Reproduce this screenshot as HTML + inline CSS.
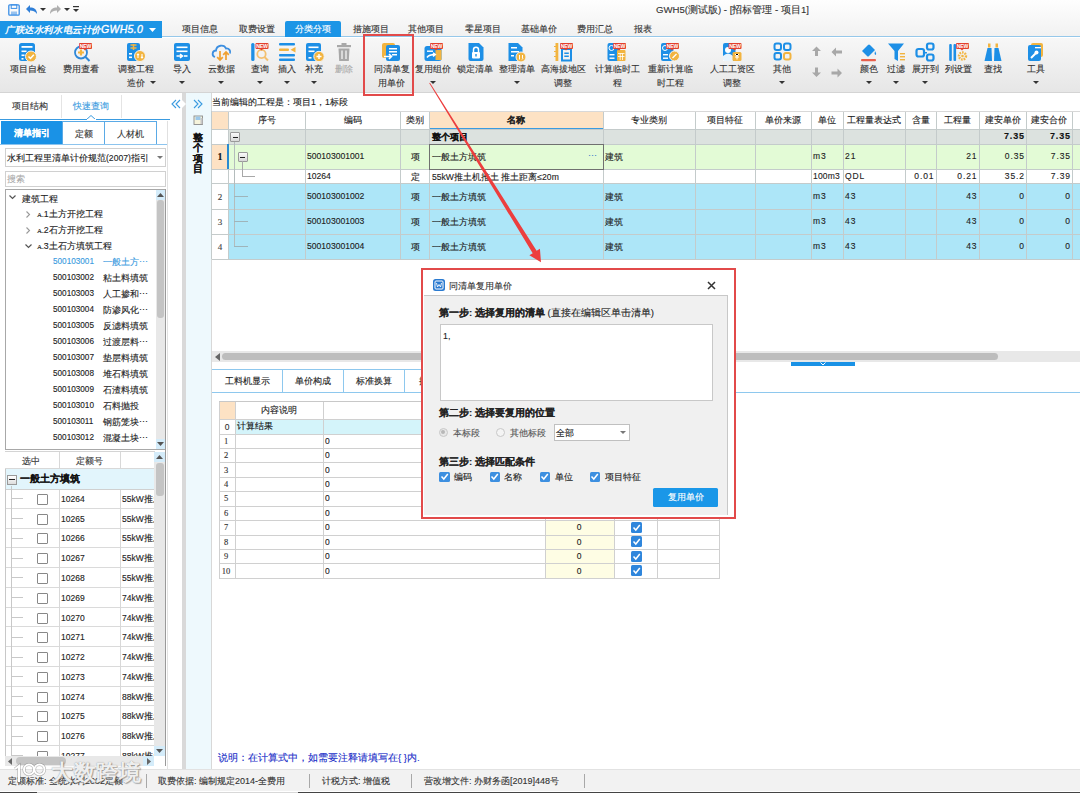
<!DOCTYPE html>
<html><head><meta charset="utf-8"><style>
html,body{margin:0;padding:0;width:1080px;height:793px;overflow:hidden;background:#fff}
body{position:relative;font-family:"Liberation Sans",sans-serif}
div{position:absolute;box-sizing:content-box}
.t{white-space:nowrap;-webkit-text-stroke:0.12px currentColor}
</style></head><body>
<div style="left:0px;top:0px;width:1080px;height:37px;background:linear-gradient(#fefefe,#f1f1f1)"></div>
<svg style="position:absolute;left:7.5px;top:3.5px" width="12" height="12" viewBox="0 0 12 12"><rect x="0.8" y="0.8" width="10.4" height="10.4" rx="1" fill="none" stroke="#3a8ee6" stroke-width="1.3"/><rect x="3.2" y="0.8" width="5.6" height="3.6" fill="none" stroke="#3a8ee6" stroke-width="1"/><rect x="3" y="7.5" width="6" height="3.5" fill="#3a8ee6" opacity=".5"/></svg>
<svg style="position:absolute;left:25px;top:4px" width="13" height="11" viewBox="0 0 13 11"><path d="M1 5 L5 1 L5 3.5 C9 3.5 12 5 12 10 C10 7 8 6.5 5 6.5 L5 9 Z" fill="#2f7fd8"/></svg>
<svg style="position:absolute;left:40px;top:8px" width="6" height="4" viewBox="0 0 6 4"><path d="M0 0 L6 0 L3 3 Z" fill="#333"/></svg>
<svg style="position:absolute;left:49px;top:4px" width="13" height="11" viewBox="0 0 13 11"><path d="M12 5 L8 1 L8 3.5 C4 3.5 1 5 1 10 C3 7 5 6.5 8 6.5 L8 9 Z" fill="#b0b0b0"/></svg>
<svg style="position:absolute;left:64px;top:8px" width="6" height="4" viewBox="0 0 6 4"><path d="M0 0 L6 0 L3 3 Z" fill="#333"/></svg>
<svg style="position:absolute;left:73px;top:6px" width="6" height="8" viewBox="0 0 6 8"><rect x="0" y="0" width="6" height="1.2" fill="#333"/><path d="M0 3 L6 3 L3 6 Z" fill="#333"/></svg>
<div class="t" style="left:656px;top:3.00px;height:14px;line-height:14px;font-size:9.6px;color:#333;text-align:left;">GWH5(测试版) - [招标管理 - 项目1]</div>
<div style="left:0px;top:21px;width:162px;height:16.5px;background:#1c95e6"></div>
<div class="t" style="left:5px;top:21.00px;height:16px;line-height:16px;font-size:9.3px;color:#fff;text-align:left;font-style:italic;letter-spacing:0.6px;-webkit-text-stroke:0.35px #fff">广联达水利水电云计价<span style="font-size:10.5px;letter-spacing:0.3px;font-style:italic">GWH5.0</span></div>
<svg style="position:absolute;left:149px;top:27.5px" width="7" height="4" viewBox="0 0 7 4"><path d="M0 0 L7 0 L3.5 4 Z" fill="#fff"/></svg>
<div style="left:162px;top:36px;width:918px;height:1.4px;background:#96c8ea"></div>
<div style="left:0px;top:37.5px;width:1080px;height:1px;background:#fbfbfb"></div>
<div class="t" style="left:140.0px;top:21.00px;width:120px;height:16px;line-height:16px;font-size:8.8px;color:#333;text-align:center;">项目信息</div>
<div class="t" style="left:197.0px;top:21.00px;width:120px;height:16px;line-height:16px;font-size:8.8px;color:#333;text-align:center;">取费设置</div>
<div style="left:285px;top:21px;width:56px;height:16px;background:#1c95e6;border-radius:2px 2px 0 0"></div>
<div class="t" style="left:253.0px;top:21.00px;width:120px;height:16px;line-height:16px;font-size:8.8px;color:#fff;text-align:center;">分类分项</div>
<div class="t" style="left:311.0px;top:21.00px;width:120px;height:16px;line-height:16px;font-size:8.8px;color:#333;text-align:center;">措施项目</div>
<div class="t" style="left:366.0px;top:21.00px;width:120px;height:16px;line-height:16px;font-size:8.8px;color:#333;text-align:center;">其他项目</div>
<div class="t" style="left:423.0px;top:21.00px;width:120px;height:16px;line-height:16px;font-size:8.8px;color:#333;text-align:center;">零星项目</div>
<div class="t" style="left:479.0px;top:21.00px;width:120px;height:16px;line-height:16px;font-size:8.8px;color:#333;text-align:center;">基础单价</div>
<div class="t" style="left:535.0px;top:21.00px;width:120px;height:16px;line-height:16px;font-size:8.8px;color:#333;text-align:center;">费用汇总</div>
<div class="t" style="left:583.0px;top:21.00px;width:120px;height:16px;line-height:16px;font-size:8.8px;color:#333;text-align:center;">报表</div>
<div style="left:0px;top:38px;width:1080px;height:55px;background:linear-gradient(#f7f7f7,#e6e6e6)"></div>
<div style="left:0px;top:92px;width:1080px;height:1px;background:#d4d4d4"></div>
<svg style="position:absolute;left:18px;top:42px" width="20" height="21" viewBox="0 0 20 21"><rect x="1" y="1" width="16" height="18" rx="2.5" fill="#1d8fe6"/><rect x="3.5" y="4" width="11" height="1.8" fill="#fff"/><rect x="3.5" y="8.5" width="5" height="1.6" fill="#fff"/><rect x="3.5" y="12.5" width="3" height="1.6" fill="#fff"/><rect x="3.5" y="16" width="2" height="1.6" fill="#fff"/><circle cx="13" cy="14.5" r="5.5" fill="#f2b440" stroke="#f4f4f4" stroke-width="1"/><path d="M10.5 14.5 L12.5 16.5 L15.8 12.8" stroke="#fff" stroke-width="1.5" fill="none"/></svg>
<div class="t" style="left:-12.0px;top:62.00px;width:80px;height:14px;line-height:14px;font-size:8.8px;color:#333;text-align:center;">项目自检</div>
<svg style="position:absolute;left:71px;top:42px" width="22" height="21" viewBox="0 0 22 21"><circle cx="10" cy="10.5" r="6" fill="none" stroke="#2f88d8" stroke-width="1.8"/><path d="M14.3 14.8 L18.5 19" stroke="#2f88d8" stroke-width="2"/><path d="M10 7.5 V13.5 M7 10.5 H13" stroke="#f2b440" stroke-width="2.2"/><g transform="translate(8,1)"><rect x="0" y="0" width="13" height="6" rx="1" fill="#e3402e"/><path d="M4 5.5 L6 7.5 L8 5.5 Z" fill="#e3402e"/><text x="6.5" y="5" font-size="5.2" fill="#fff" text-anchor="middle" font-family="Liberation Sans" font-weight="bold" letter-spacing="-0.2">NEW</text></g></svg>
<div class="t" style="left:41.0px;top:62.00px;width:80px;height:14px;line-height:14px;font-size:8.8px;color:#333;text-align:center;">费用查看</div>
<svg style="position:absolute;left:126px;top:42px" width="22" height="21" viewBox="0 0 22 21"><rect x="1" y="1" width="13" height="18" rx="2" fill="#1d8fe6"/><path d="M4.5 3 H10.5 M4.5 6 H10.5 M7.5 2 V8" stroke="#f2b440" stroke-width="1.5"/><rect x="3" y="11" width="3" height="1.6" fill="#fff"/><rect x="3" y="14.5" width="3" height="1.6" fill="#fff"/><circle cx="14" cy="14" r="5.5" fill="#f2b440" stroke="#f4f4f4" stroke-width="1"/><path d="M12 12 V16 M16 12 V16 M11 13 L12 12 L13 13 M15 15 L16 16 L17 15" stroke="#fff" stroke-width="1.1" fill="none"/></svg>
<div class="t" style="left:96.0px;top:62.00px;width:80px;height:14px;line-height:14px;font-size:8.8px;color:#333;text-align:center;">调整工程</div>
<div class="t" style="left:96.0px;top:76.00px;width:80px;height:14px;line-height:14px;font-size:8.8px;color:#333;text-align:center;">造价 </div>
<svg style="position:absolute;left:150px;top:81px" width="6" height="4" viewBox="0 0 6 4"><path d="M0 0 L6 0 L3 3 Z" fill="#333"/></svg>
<svg style="position:absolute;left:173px;top:42px" width="18" height="21" viewBox="0 0 18 21"><rect x="1" y="1" width="16" height="18" rx="2" fill="#1d8fe6"/><rect x="3.5" y="4.5" width="11" height="1.6" fill="#fff"/><rect x="3.5" y="8.5" width="11" height="1.6" fill="#fff"/><path d="M3.5 14 H9 M7 12 L9.5 14 L7 16" stroke="#fff" stroke-width="1.6" fill="none"/><rect x="11" y="13.2" width="3.5" height="1.6" fill="#fff"/></svg>
<div class="t" style="left:142.0px;top:62.00px;width:80px;height:14px;line-height:14px;font-size:8.8px;color:#333;text-align:center;">导入</div>
<svg style="position:absolute;left:179px;top:81px" width="6" height="4" viewBox="0 0 6 4"><path d="M0 0 L6 0 L3 3 Z" fill="#333"/></svg>
<svg style="position:absolute;left:211px;top:42px" width="22" height="21" viewBox="0 0 22 21"><path d="M4 15 C0.5 14 1 8.5 5 8.5 C5.5 3 13 2 15 6.5 C18 6 20 9 19 11.5" fill="none" stroke="#3b8ee0" stroke-width="1.8"/><path d="M9 9 V18 M6.2 15.2 L9 18 L11.8 15.2" stroke="#f0a030" stroke-width="1.7" fill="none"/><path d="M15 18 V10 M12.2 12.8 L15 10 L17.8 12.8" stroke="#f0a030" stroke-width="1.7" fill="none"/></svg>
<div class="t" style="left:181.0px;top:62.00px;width:80px;height:14px;line-height:14px;font-size:8.8px;color:#333;text-align:center;">云数据</div>
<svg style="position:absolute;left:218px;top:81px" width="6" height="4" viewBox="0 0 6 4"><path d="M0 0 L6 0 L3 3 Z" fill="#333"/></svg>
<svg style="position:absolute;left:250px;top:42px" width="22" height="21" viewBox="0 0 22 21"><rect x="1.2" y="1" width="3.3" height="18" rx="1.5" fill="#1d8fe6"/><circle cx="11.5" cy="12" r="4.2" fill="none" stroke="#f3c070" stroke-width="1.8"/><path d="M14.5 15 L18 18.5" stroke="#f3c070" stroke-width="2"/><g transform="translate(5.5,1)"><rect x="0" y="0" width="13" height="6" rx="1" fill="#e3402e"/><path d="M4 5.5 L6 7.5 L8 5.5 Z" fill="#e3402e"/><text x="6.5" y="5" font-size="5.2" fill="#fff" text-anchor="middle" font-family="Liberation Sans" font-weight="bold" letter-spacing="-0.2">NEW</text></g></svg>
<div class="t" style="left:220.0px;top:62.00px;width:80px;height:14px;line-height:14px;font-size:8.8px;color:#333;text-align:center;">查询</div>
<svg style="position:absolute;left:257px;top:81px" width="6" height="4" viewBox="0 0 6 4"><path d="M0 0 L6 0 L3 3 Z" fill="#333"/></svg>
<svg style="position:absolute;left:278px;top:42px" width="20" height="21" viewBox="0 0 20 21"><rect x="1" y="1" width="16" height="2.6" rx="1" fill="#1d8fe6"/><rect x="1" y="6.5" width="10" height="2.6" rx="1" fill="#f2b440"/><path d="M17.5 5 L12.5 7.8 L17.5 10.6 Z" fill="#f2b440"/><rect x="1" y="12" width="16" height="2.6" rx="1" fill="#1d8fe6"/><rect x="1" y="16.5" width="16" height="2.6" rx="1" fill="#1d8fe6"/></svg>
<div class="t" style="left:247.0px;top:62.00px;width:80px;height:14px;line-height:14px;font-size:8.8px;color:#333;text-align:center;">插入</div>
<svg style="position:absolute;left:284px;top:81px" width="6" height="4" viewBox="0 0 6 4"><path d="M0 0 L6 0 L3 3 Z" fill="#333"/></svg>
<svg style="position:absolute;left:305px;top:42px" width="20" height="21" viewBox="0 0 20 21"><rect x="1" y="1" width="15" height="18" rx="2" fill="#1d8fe6"/><rect x="3.5" y="4.5" width="10" height="1.6" fill="#fff"/><rect x="3.5" y="8.5" width="6" height="1.6" fill="#fff"/><rect x="3.5" y="15" width="3" height="1.6" fill="#fff"/><circle cx="14" cy="14.5" r="5.2" fill="#f2b440" stroke="#f4f4f4" stroke-width="1"/><path d="M14 12 V17 M11.5 14.5 H16.5" stroke="#fff" stroke-width="1.4"/></svg>
<div class="t" style="left:274.0px;top:62.00px;width:80px;height:14px;line-height:14px;font-size:8.8px;color:#333;text-align:center;">补充</div>
<svg style="position:absolute;left:311px;top:81px" width="6" height="4" viewBox="0 0 6 4"><path d="M0 0 L6 0 L3 3 Z" fill="#333"/></svg>
<svg style="position:absolute;left:335px;top:42px" width="18" height="21" viewBox="0 0 18 21"><rect x="2" y="3" width="14" height="2.2" fill="#a8a8a8"/><rect x="6.5" y="1" width="5" height="2" fill="#a8a8a8"/><path d="M3.5 6.5 H14.5 L13.8 19 H4.2 Z" fill="#a8a8a8"/><rect x="6.3" y="8.5" width="1.4" height="8.5" fill="#f0f0f0"/><rect x="10.3" y="8.5" width="1.4" height="8.5" fill="#f0f0f0"/></svg>
<div class="t" style="left:304.0px;top:62.00px;width:80px;height:14px;line-height:14px;font-size:8.8px;color:#aaa;text-align:center;">删除</div>
<svg style="position:absolute;left:381px;top:41px" width="22" height="21" viewBox="0 0 22 21"><rect x="1" y="2" width="13" height="15" rx="2" fill="#f2b440"/><rect x="5" y="4" width="14" height="16" rx="2" fill="#1d8fe6"/><rect x="8" y="7" width="8" height="1.5" fill="#fff"/><rect x="8" y="10" width="8" height="1.5" fill="#fff"/><rect x="11" y="13" width="5" height="1.5" fill="#fff"/><path d="M3 15.5 H10 M8 13 L10.5 15.5 L8 18" stroke="#fff" stroke-width="1.6" fill="none"/></svg>
<div class="t" style="left:351.5px;top:62.00px;width:80px;height:14px;line-height:14px;font-size:8.8px;color:#333;text-align:center;">同清单复</div>
<div class="t" style="left:351.5px;top:76.00px;width:80px;height:14px;line-height:14px;font-size:8.8px;color:#333;text-align:center;">用单价</div>
<svg style="position:absolute;left:423px;top:42px" width="22" height="21" viewBox="0 0 22 21"><rect x="1.5" y="4" width="17" height="15" rx="2.5" fill="#1d8fe6"/><rect x="12.5" y="8" width="6" height="10" fill="#f2b440"/><rect x="4" y="8.5" width="6" height="1.4" fill="#fff"/><path d="M4 15.5 C6 12.5 9 12.5 12 12.5 M10 10.8 L12.3 12.5 L10 14.3" stroke="#fff" stroke-width="1.5" fill="none"/><g transform="translate(7,1)"><rect x="0" y="0" width="13" height="6" rx="1" fill="#e3402e"/><path d="M4 5.5 L6 7.5 L8 5.5 Z" fill="#e3402e"/><text x="6.5" y="5" font-size="5.2" fill="#fff" text-anchor="middle" font-family="Liberation Sans" font-weight="bold" letter-spacing="-0.2">NEW</text></g></svg>
<div class="t" style="left:393.0px;top:62.00px;width:80px;height:14px;line-height:14px;font-size:8.8px;color:#333;text-align:center;">复用组价</div>
<svg style="position:absolute;left:430px;top:81px" width="6" height="4" viewBox="0 0 6 4"><path d="M0 0 L6 0 L3 3 Z" fill="#333"/></svg>
<svg style="position:absolute;left:466px;top:42px" width="20" height="21" viewBox="0 0 20 21"><path d="M2.5 1 H13 L17.5 5.5 V17 Q17.5 19 15.5 19 H4.5 Q2.5 19 2.5 17 Z" fill="#1d8fe6"/><rect x="6" y="10" width="8" height="6.5" rx="1" fill="#fff"/><path d="M7.5 10 V7.8 A2.5 2.5 0 0 1 12.5 7.8 V10" stroke="#fff" stroke-width="1.5" fill="none"/><rect x="9.3" y="12" width="1.4" height="2.5" fill="#1d8fe6"/></svg>
<div class="t" style="left:435.0px;top:62.00px;width:80px;height:14px;line-height:14px;font-size:8.8px;color:#333;text-align:center;">锁定清单</div>
<svg style="position:absolute;left:507px;top:42px" width="21" height="21" viewBox="0 0 21 21"><path d="M1.5 1 H11 L15.5 5.5 V19 H1.5 Z" fill="#1d8fe6"/><rect x="4" y="5" width="6" height="1.5" fill="#fff"/><rect x="4" y="9" width="8" height="1.5" fill="#fff"/><rect x="4" y="13" width="3" height="1.5" fill="#fff"/><circle cx="14" cy="15" r="5" fill="#f2b440" stroke="#f4f4f4" stroke-width="1"/><path d="M12.5 13 V17.5 M15 13 Q17 14 15 15 Q17 16 15 17.5" stroke="#fff" stroke-width="1" fill="none"/></svg>
<div class="t" style="left:477.0px;top:62.00px;width:80px;height:14px;line-height:14px;font-size:8.8px;color:#333;text-align:center;">整理清单</div>
<svg style="position:absolute;left:514px;top:81px" width="6" height="4" viewBox="0 0 6 4"><path d="M0 0 L6 0 L3 3 Z" fill="#333"/></svg>
<svg style="position:absolute;left:553px;top:42px" width="22" height="21" viewBox="0 0 22 21"><rect x="2.5" y="1" width="2.8" height="18" fill="#f2b440"/><rect x="1" y="4" width="2" height="1" fill="#f2b440"/><rect x="1" y="9" width="2" height="1" fill="#f2b440"/><rect x="1" y="14" width="2" height="1" fill="#f2b440"/><rect x="9" y="7" width="9" height="11.5" fill="none" stroke="#1d8fe6" stroke-width="2"/><rect x="11.3" y="10.5" width="4.5" height="1.5" fill="#1d8fe6"/><rect x="11.3" y="13.5" width="4.5" height="1.5" fill="#1d8fe6"/><g transform="translate(7,1)"><rect x="0" y="0" width="13" height="6" rx="1" fill="#e3402e"/><path d="M4 5.5 L6 7.5 L8 5.5 Z" fill="#e3402e"/><text x="6.5" y="5" font-size="5.2" fill="#fff" text-anchor="middle" font-family="Liberation Sans" font-weight="bold" letter-spacing="-0.2">NEW</text></g></svg>
<div class="t" style="left:523.0px;top:62.00px;width:80px;height:14px;line-height:14px;font-size:8.8px;color:#333;text-align:center;">高海拔地区</div>
<div class="t" style="left:523.0px;top:76.00px;width:80px;height:14px;line-height:14px;font-size:8.8px;color:#333;text-align:center;">调整</div>
<svg style="position:absolute;left:606px;top:42px" width="22" height="21" viewBox="0 0 22 21"><rect x="1.5" y="1" width="12.5" height="18" rx="2" fill="#1d8fe6"/><circle cx="5.5" cy="6" r="2.5" fill="none" stroke="#fff" stroke-width="1"/><rect x="3.5" y="12" width="5" height="1.4" fill="#fff"/><rect x="3.5" y="15.5" width="5" height="1.4" fill="#fff"/><rect x="11" y="8" width="8.5" height="11" rx="1" fill="#f2b440"/><path d="M12 11.5 H18.5 M12 14.5 H18.5 M14.2 11.5 V18 M16.5 11.5 V18" stroke="#fff" stroke-width="0.8"/><g transform="translate(7,1)"><rect x="0" y="0" width="13" height="6" rx="1" fill="#e3402e"/><path d="M4 5.5 L6 7.5 L8 5.5 Z" fill="#e3402e"/><text x="6.5" y="5" font-size="5.2" fill="#fff" text-anchor="middle" font-family="Liberation Sans" font-weight="bold" letter-spacing="-0.2">NEW</text></g></svg>
<div class="t" style="left:577.0px;top:62.00px;width:80px;height:14px;line-height:14px;font-size:8.8px;color:#333;text-align:center;">计算临时工</div>
<div class="t" style="left:577.0px;top:76.00px;width:80px;height:14px;line-height:14px;font-size:8.8px;color:#333;text-align:center;">程</div>
<svg style="position:absolute;left:660px;top:42px" width="22" height="21" viewBox="0 0 22 21"><rect x="1" y="1" width="12.5" height="18" rx="2" fill="#1d8fe6"/><circle cx="5" cy="6" r="2.5" fill="none" stroke="#fff" stroke-width="1"/><rect x="3" y="12" width="5" height="1.4" fill="#fff"/><rect x="3" y="15.5" width="5" height="1.4" fill="#fff"/><circle cx="14.5" cy="14" r="5" fill="#f2b440" stroke="#f4f4f4" stroke-width="1"/><path d="M12.5 16 L16.5 12" stroke="#fff" stroke-width="1.2"/><g transform="translate(6,1)"><rect x="0" y="0" width="13" height="6" rx="1" fill="#e3402e"/><path d="M4 5.5 L6 7.5 L8 5.5 Z" fill="#e3402e"/><text x="6.5" y="5" font-size="5.2" fill="#fff" text-anchor="middle" font-family="Liberation Sans" font-weight="bold" letter-spacing="-0.2">NEW</text></g></svg>
<div class="t" style="left:630.0px;top:62.00px;width:80px;height:14px;line-height:14px;font-size:8.8px;color:#333;text-align:center;">重新计算临</div>
<div class="t" style="left:630.0px;top:76.00px;width:80px;height:14px;line-height:14px;font-size:8.8px;color:#333;text-align:center;">时工程</div>
<svg style="position:absolute;left:722px;top:42px" width="22" height="21" viewBox="0 0 22 21"><rect x="1" y="1" width="12.5" height="18" rx="2" fill="#1d8fe6"/><circle cx="6" cy="8" r="3" fill="#fff"/><path d="M1 14 Q6 9 11 14 V19 H1 Z" fill="#fff" opacity=".9"/><rect x="10.5" y="10" width="9" height="9" rx="1.5" fill="#f2b440"/><path d="M13 12 L15 14 L17 12 M15 14 V17.5 M13 15 H17" stroke="#fff" stroke-width="1"/><g transform="translate(6.5,1)"><rect x="0" y="0" width="13" height="6" rx="1" fill="#e3402e"/><path d="M4 5.5 L6 7.5 L8 5.5 Z" fill="#e3402e"/><text x="6.5" y="5" font-size="5.2" fill="#fff" text-anchor="middle" font-family="Liberation Sans" font-weight="bold" letter-spacing="-0.2">NEW</text></g></svg>
<div class="t" style="left:692.0px;top:62.00px;width:80px;height:14px;line-height:14px;font-size:8.8px;color:#333;text-align:center;">人工工资区</div>
<div class="t" style="left:692.0px;top:76.00px;width:80px;height:14px;line-height:14px;font-size:8.8px;color:#333;text-align:center;">调整</div>
<svg style="position:absolute;left:773px;top:42px" width="20" height="21" viewBox="0 0 20 21"><rect x="1.5" y="1.5" width="6.5" height="6.5" rx="2" fill="none" stroke="#1d8fe6" stroke-width="2"/><rect x="11" y="1.5" width="6.5" height="6.5" rx="2" fill="none" stroke="#1d8fe6" stroke-width="2"/><rect x="1.5" y="11" width="6.5" height="6.5" rx="2" fill="none" stroke="#1d8fe6" stroke-width="2"/><rect x="11" y="11" width="6.5" height="6.5" rx="2" fill="none" stroke="#f2b440" stroke-width="2"/></svg>
<div class="t" style="left:742.0px;top:62.00px;width:80px;height:14px;line-height:14px;font-size:8.8px;color:#333;text-align:center;">其他</div>
<svg style="position:absolute;left:779px;top:81px" width="6" height="4" viewBox="0 0 6 4"><path d="M0 0 L6 0 L3 3 Z" fill="#333"/></svg>
<svg style="position:absolute;left:811px;top:46px" width="11" height="11" viewBox="0 0 11 11"><path d="M5.5 0.5 L10 5 H7 V10 H4 V5 H1 Z" fill="#a8a8a8"/></svg>
<svg style="position:absolute;left:831px;top:47px" width="12" height="10" viewBox="0 0 12 10"><path d="M0.5 5 L5 0.5 V3.5 H11 V6.5 H5 V9.5 Z" fill="#a8a8a8"/></svg>
<svg style="position:absolute;left:811px;top:67px" width="11" height="11" viewBox="0 0 11 11"><path d="M5.5 10 L10 5.5 H7 V0.5 H4 V5.5 H1 Z" fill="#a8a8a8"/></svg>
<svg style="position:absolute;left:831px;top:68px" width="12" height="10" viewBox="0 0 12 10"><path d="M11 5 L6.5 0.5 V3.5 H0.5 V6.5 H6.5 V9.5 Z" fill="#a8a8a8"/></svg>
<svg style="position:absolute;left:859px;top:42px" width="20" height="21" viewBox="0 0 20 21"><path d="M3 9 L9 3 Q10 2 11 3 L16 8 L10 14 Q9 15 8 14 L3 9 Z" fill="#1d8fe6"/><path d="M16 9 Q18 12 16.5 13 Q15 12 16 9 Z" fill="#1d8fe6"/><rect x="2" y="17" width="15" height="2.2" rx="1" fill="#e8604c"/></svg>
<div class="t" style="left:829.0px;top:62.00px;width:80px;height:14px;line-height:14px;font-size:8.8px;color:#333;text-align:center;">颜色</div>
<svg style="position:absolute;left:866px;top:81px" width="6" height="4" viewBox="0 0 6 4"><path d="M0 0 L6 0 L3 3 Z" fill="#333"/></svg>
<svg style="position:absolute;left:887px;top:42px" width="20" height="21" viewBox="0 0 20 21"><path d="M1 1.5 H17 L11 9 V19 L7.5 17 V9 Z" fill="#1d8fe6"/><rect x="13" y="11" width="5" height="1.4" fill="#f2b440"/><rect x="13" y="14" width="5" height="1.4" fill="#f2b440"/><rect x="13" y="17" width="5" height="1.4" fill="#f2b440"/></svg>
<div class="t" style="left:856.0px;top:62.00px;width:80px;height:14px;line-height:14px;font-size:8.8px;color:#333;text-align:center;">过滤</div>
<svg style="position:absolute;left:893px;top:81px" width="6" height="4" viewBox="0 0 6 4"><path d="M0 0 L6 0 L3 3 Z" fill="#333"/></svg>
<svg style="position:absolute;left:915px;top:42px" width="20" height="21" viewBox="0 0 20 21"><rect x="1.5" y="7" width="7.5" height="7.5" rx="2" fill="none" stroke="#1d8fe6" stroke-width="2.2"/><rect x="12" y="1.5" width="6.5" height="6" rx="2" fill="none" stroke="#1d8fe6" stroke-width="2.2"/><rect x="12" y="12.5" width="6.5" height="6" rx="2" fill="none" stroke="#1d8fe6" stroke-width="2.2"/><path d="M9 10.75 H12" stroke="#1d8fe6" stroke-width="1.5"/></svg>
<div class="t" style="left:885.0px;top:62.00px;width:80px;height:14px;line-height:14px;font-size:8.8px;color:#333;text-align:center;">展开到</div>
<svg style="position:absolute;left:922px;top:81px" width="6" height="4" viewBox="0 0 6 4"><path d="M0 0 L6 0 L3 3 Z" fill="#333"/></svg>
<svg style="position:absolute;left:948px;top:42px" width="22" height="21" viewBox="0 0 22 21"><rect x="1.2" y="2" width="2.6" height="17" rx="1" fill="#1d8fe6"/><rect x="5.5" y="2" width="2.6" height="17" rx="1" fill="#1d8fe6"/><circle cx="14.5" cy="14" r="3.5" fill="none" stroke="#f2b440" stroke-width="2.4" stroke-dasharray="1.6 1"/><circle cx="14.5" cy="14" r="1.3" fill="#f2b440"/><g transform="translate(8,1)"><rect x="0" y="0" width="13" height="6" rx="1" fill="#e3402e"/><path d="M4 5.5 L6 7.5 L8 5.5 Z" fill="#e3402e"/><text x="6.5" y="5" font-size="5.2" fill="#fff" text-anchor="middle" font-family="Liberation Sans" font-weight="bold" letter-spacing="-0.2">NEW</text></g></svg>
<div class="t" style="left:918.0px;top:62.00px;width:80px;height:14px;line-height:14px;font-size:8.8px;color:#333;text-align:center;">列设置</div>
<svg style="position:absolute;left:983px;top:42px" width="20" height="21" viewBox="0 0 20 21"><path d="M1.5 19 L4.5 6 H8.5 L9 19 Z" fill="#1d8fe6"/><path d="M18.5 19 L15.5 6 H11.5 L11 19 Z" fill="#1d8fe6"/><rect x="5" y="1.5" width="2.5" height="4" fill="#f2b440"/><rect x="12.5" y="1.5" width="2.5" height="4" fill="#f2b440"/></svg>
<div class="t" style="left:953.0px;top:62.00px;width:80px;height:14px;line-height:14px;font-size:8.8px;color:#333;text-align:center;">查找</div>
<svg style="position:absolute;left:1026px;top:42px" width="20" height="21" viewBox="0 0 20 21"><rect x="5" y="1" width="12" height="14" rx="2" fill="#f2b440"/><path d="M2 5 Q2 3 4 3 H13 Q15 3 15 5 V17 Q15 19 13 19 H4 Q2 19 2 17 Z" fill="#1d8fe6"/><path d="M5 16 L10 11" stroke="#fff" stroke-width="2"/><circle cx="10.5" cy="10.5" r="2" fill="#fff"/><rect x="9" y="5" width="6" height="1.3" fill="#fff"/></svg>
<div class="t" style="left:996.0px;top:62.00px;width:80px;height:14px;line-height:14px;font-size:8.8px;color:#333;text-align:center;">工具</div>
<svg style="position:absolute;left:1033px;top:81px" width="6" height="4" viewBox="0 0 6 4"><path d="M0 0 L6 0 L3 3 Z" fill="#333"/></svg>
<!--MAIN-->
<div style="left:0px;top:93px;width:168px;height:676px;background:#fff"></div>
<div style="left:168px;top:93px;width:14px;height:676px;background:#fff"></div>
<div style="left:182px;top:93px;width:4px;height:676px;background:#d9d9d9"></div>
<div style="left:186px;top:93px;width:25px;height:676px;background:#eef9fd"></div>
<div style="left:211px;top:93px;width:1px;height:676px;background:#d8d8d8"></div>
<div class="t" style="left:-30.0px;top:99.00px;width:120px;height:14px;line-height:14px;font-size:8.8px;color:#333;text-align:center;">项目结构</div>
<div class="t" style="left:31.0px;top:99.00px;width:120px;height:14px;line-height:14px;font-size:8.8px;color:#3a9be0;text-align:center;">快速查询</div>
<div style="left:61px;top:95px;width:1px;height:23px;background:#e4e4e4"></div>
<div style="left:121px;top:95px;width:1px;height:23px;background:#e4e4e4"></div>
<div style="left:0px;top:118.5px;width:170px;height:1.5px;background:#3a9be0"></div>
<svg style="position:absolute;left:86px;top:114.5px" width="10" height="5" viewBox="0 0 10 5"><path d="M0 5 L5 0.5 L10 5 Z" fill="#fff" stroke="#3a9be0" stroke-width="1"/></svg>
<div style="left:86.5px;top:119px;width:9px;height:1.6px;background:#fff"></div>
<div style="left:1px;top:121px;width:156px;height:24px;border:1px solid #5aaae6;box-sizing:border-box;background:#fff"></div>
<div style="left:1px;top:121px;width:61px;height:23.5px;background:#1a92e6"></div>
<div class="t" style="left:-28.0px;top:126.00px;width:120px;height:14px;line-height:14px;font-size:9.3px;color:#fff;text-align:center;font-weight:bold">清单指引</div>
<div style="left:62px;top:121px;width:1px;height:24px;background:#5aaae6"></div>
<div class="t" style="left:23.5px;top:127.00px;width:120px;height:14px;line-height:14px;font-size:8.8px;color:#333;text-align:center;">定额</div>
<div style="left:104px;top:121px;width:1px;height:24px;background:#5aaae6"></div>
<div class="t" style="left:70.0px;top:127.00px;width:120px;height:14px;line-height:14px;font-size:8.8px;color:#333;text-align:center;">人材机</div>
<div style="left:0px;top:144px;width:168px;height:1.2px;background:#8cc4ee"></div>
<div style="left:167px;top:121px;width:1px;height:23px;background:#e0e0e0"></div>
<div style="left:5px;top:148px;width:161px;height:19px;border:1px solid #d0d0d0;box-sizing:border-box;background:#fff"></div>
<div class="t" style="left:7px;top:150.50px;height:14px;line-height:14px;font-size:8.6px;color:#222;text-align:left;">水利工程里清单计价规范(2007)指引</div>
<svg style="position:absolute;left:157px;top:156px" width="6" height="4" viewBox="0 0 6 4"><path d="M0 0 L6 0 L3 3 Z" fill="#777"/></svg>
<div style="left:5px;top:171px;width:161px;height:16px;border:1px solid #d0d0d0;box-sizing:border-box;background:#fff"></div>
<div class="t" style="left:7px;top:172.00px;height:14px;line-height:14px;font-size:8.6px;color:#aaa;text-align:left;">搜索</div>
<div style="left:5px;top:189px;width:161px;height:261px;border:1px solid #a8a8a8;box-sizing:border-box;background:#fff"></div>
<div style="left:156px;top:190px;width:9px;height:259px;background:#e8e8e8"></div>
<div style="left:156px;top:190px;width:9px;height:10px;background:#d4ecfa"></div>
<svg style="position:absolute;left:157px;top:193px" width="7" height="4" viewBox="0 0 7 4"><path d="M0 4 L3.5 0 L7 4 Z" fill="#555"/></svg>
<div style="left:157px;top:200px;width:7px;height:118px;background:#c4c4c4;border-radius:3px"></div>
<div style="left:156px;top:439px;width:9px;height:10px;background:#d4ecfa"></div>
<svg style="position:absolute;left:157px;top:442px" width="7" height="4" viewBox="0 0 7 4"><path d="M0 0 L3.5 4 L7 0 Z" fill="#555"/></svg>
<svg style="position:absolute;left:9px;top:195px" width="7" height="5" viewBox="0 0 7 5"><path d="M0.5 0.5 L3.5 3.5 L6.5 0.5" stroke="#555" stroke-width="1.2" fill="none"/></svg>
<div class="t" style="left:22px;top:191.50px;height:14px;line-height:14px;font-size:8.8px;color:#222;text-align:left;">建筑工程</div>
<svg style="position:absolute;left:26px;top:210.5px" width="5" height="7" viewBox="0 0 5 7"><path d="M0.5 0.5 L3.5 3.5 L0.5 6.5" stroke="#999" stroke-width="1.1" fill="none"/></svg>
<div class="t" style="left:37px;top:207.00px;height:14px;line-height:14px;font-size:8.8px;color:#222;text-align:left;"><span style="font-size:7px;font-family:Liberation Serif">A.</span>1土方开挖工程</div>
<svg style="position:absolute;left:26px;top:226.5px" width="5" height="7" viewBox="0 0 5 7"><path d="M0.5 0.5 L3.5 3.5 L0.5 6.5" stroke="#999" stroke-width="1.1" fill="none"/></svg>
<div class="t" style="left:37px;top:223.00px;height:14px;line-height:14px;font-size:8.8px;color:#222;text-align:left;"><span style="font-size:7px;font-family:Liberation Serif">A.</span>2石方开挖工程</div>
<svg style="position:absolute;left:25px;top:243.5px" width="7" height="5" viewBox="0 0 7 5"><path d="M0.5 0.5 L3.5 3.5 L6.5 0.5" stroke="#555" stroke-width="1.2" fill="none"/></svg>
<div class="t" style="left:37px;top:239.00px;height:14px;line-height:14px;font-size:8.8px;color:#222;text-align:left;"><span style="font-size:7px;font-family:Liberation Serif">A.</span>3土石方填筑工程</div>
<div class="t" style="left:53px;top:255.00px;height:14px;line-height:14px;font-size:8.2px;color:#3a9be0;text-align:left;">500103001</div>
<div class="t" style="left:103px;top:255.00px;height:14px;line-height:14px;font-size:8.8px;color:#3a9be0;text-align:left;">一般土方⋯</div>
<div class="t" style="left:53px;top:271.00px;height:14px;line-height:14px;font-size:8.2px;color:#222;text-align:left;">500103002</div>
<div class="t" style="left:103px;top:271.00px;height:14px;line-height:14px;font-size:8.8px;color:#222;text-align:left;">粘土料填筑</div>
<div class="t" style="left:53px;top:287.00px;height:14px;line-height:14px;font-size:8.2px;color:#222;text-align:left;">500103003</div>
<div class="t" style="left:103px;top:287.00px;height:14px;line-height:14px;font-size:8.8px;color:#222;text-align:left;">人工掺和⋯</div>
<div class="t" style="left:53px;top:303.00px;height:14px;line-height:14px;font-size:8.2px;color:#222;text-align:left;">500103004</div>
<div class="t" style="left:103px;top:303.00px;height:14px;line-height:14px;font-size:8.8px;color:#222;text-align:left;">防渗风化⋯</div>
<div class="t" style="left:53px;top:319.00px;height:14px;line-height:14px;font-size:8.2px;color:#222;text-align:left;">500103005</div>
<div class="t" style="left:103px;top:319.00px;height:14px;line-height:14px;font-size:8.8px;color:#222;text-align:left;">反滤料填筑</div>
<div class="t" style="left:53px;top:335.00px;height:14px;line-height:14px;font-size:8.2px;color:#222;text-align:left;">500103006</div>
<div class="t" style="left:103px;top:335.00px;height:14px;line-height:14px;font-size:8.8px;color:#222;text-align:left;">过渡层料⋯</div>
<div class="t" style="left:53px;top:351.00px;height:14px;line-height:14px;font-size:8.2px;color:#222;text-align:left;">500103007</div>
<div class="t" style="left:103px;top:351.00px;height:14px;line-height:14px;font-size:8.8px;color:#222;text-align:left;">垫层料填筑</div>
<div class="t" style="left:53px;top:367.00px;height:14px;line-height:14px;font-size:8.2px;color:#222;text-align:left;">500103008</div>
<div class="t" style="left:103px;top:367.00px;height:14px;line-height:14px;font-size:8.8px;color:#222;text-align:left;">堆石料填筑</div>
<div class="t" style="left:53px;top:383.00px;height:14px;line-height:14px;font-size:8.2px;color:#222;text-align:left;">500103009</div>
<div class="t" style="left:103px;top:383.00px;height:14px;line-height:14px;font-size:8.8px;color:#222;text-align:left;">石渣料填筑</div>
<div class="t" style="left:53px;top:399.00px;height:14px;line-height:14px;font-size:8.2px;color:#222;text-align:left;">500103010</div>
<div class="t" style="left:103px;top:399.00px;height:14px;line-height:14px;font-size:8.8px;color:#222;text-align:left;">石料抛投</div>
<div class="t" style="left:53px;top:415.00px;height:14px;line-height:14px;font-size:8.2px;color:#222;text-align:left;">500103011</div>
<div class="t" style="left:103px;top:415.00px;height:14px;line-height:14px;font-size:8.8px;color:#222;text-align:left;">钢筋笼块⋯</div>
<div class="t" style="left:53px;top:431.00px;height:14px;line-height:14px;font-size:8.2px;color:#222;text-align:left;">500103012</div>
<div class="t" style="left:103px;top:431.00px;height:14px;line-height:14px;font-size:8.8px;color:#222;text-align:left;">混凝土块⋯</div>
<div style="left:5px;top:451px;width:161px;height:315px;border-left:1px solid #c8c8c8;background:#fff"></div>
<div style="left:5px;top:452px;width:149px;height:17px;background:#fff;border-bottom:1px solid #d8d8d8;box-sizing:border-box"></div>
<div style="left:5px;top:450.5px;width:150px;height:1.5px;background:#d4d4d4"></div>
<div class="t" style="left:-29.0px;top:453.50px;width:120px;height:14px;line-height:14px;font-size:8.8px;color:#333;text-align:center;">选中</div>
<div class="t" style="left:29.0px;top:453.50px;width:120px;height:14px;line-height:14px;font-size:8.8px;color:#333;text-align:center;">定额号</div>
<div style="left:59px;top:452px;width:1px;height:17px;background:#d8d8d8"></div>
<div style="left:120px;top:452px;width:1px;height:17px;background:#d8d8d8"></div>
<div style="left:6px;top:469px;width:148px;height:21px;background:#e2f5fc;border-bottom:1px solid #d0d0d0;box-sizing:border-box"></div>
<div style="left:7px;top:474.5px;width:10px;height:10px;border:1px solid #999;box-sizing:border-box;background:linear-gradient(#fff,#ddd)"></div>
<div style="left:9px;top:479px;width:6px;height:1.2px;background:#222"></div>
<div class="t" style="left:20px;top:471.50px;height:14px;line-height:14px;font-size:9.6px;color:#111;text-align:left;font-weight:bold;-webkit-text-stroke:0.1px #111">一般土方填筑</div>
<div style="left:6px;top:507.77px;width:148px;height:1px;background:#dadada"></div>
<div style="left:11px;top:498.385px;width:12px;height:1px;background:#c8c8c8"></div>
<div style="left:37px;top:493.885px;width:11px;height:11px;border:1px solid #888;box-sizing:border-box;border-radius:1px;background:#fff"></div>
<div class="t" style="left:61px;top:491.88px;height:14px;line-height:14px;font-size:8.5px;color:#222;text-align:left;">10264</div>
<div class="t" style="left:122px;top:491.88px;height:14px;line-height:14px;font-size:8.5px;color:#222;text-align:left;white-space:nowrap;overflow:hidden;width:32px">55kW推土</div>
<div style="left:6px;top:527.54px;width:148px;height:1px;background:#dadada"></div>
<div style="left:11px;top:518.155px;width:12px;height:1px;background:#c8c8c8"></div>
<div style="left:37px;top:513.655px;width:11px;height:11px;border:1px solid #888;box-sizing:border-box;border-radius:1px;background:#fff"></div>
<div class="t" style="left:61px;top:511.65px;height:14px;line-height:14px;font-size:8.5px;color:#222;text-align:left;">10265</div>
<div class="t" style="left:122px;top:511.65px;height:14px;line-height:14px;font-size:8.5px;color:#222;text-align:left;white-space:nowrap;overflow:hidden;width:32px">55kW推土</div>
<div style="left:6px;top:547.31px;width:148px;height:1px;background:#dadada"></div>
<div style="left:11px;top:537.925px;width:12px;height:1px;background:#c8c8c8"></div>
<div style="left:37px;top:533.425px;width:11px;height:11px;border:1px solid #888;box-sizing:border-box;border-radius:1px;background:#fff"></div>
<div class="t" style="left:61px;top:531.42px;height:14px;line-height:14px;font-size:8.5px;color:#222;text-align:left;">10266</div>
<div class="t" style="left:122px;top:531.42px;height:14px;line-height:14px;font-size:8.5px;color:#222;text-align:left;white-space:nowrap;overflow:hidden;width:32px">55kW推土</div>
<div style="left:6px;top:567.0799999999999px;width:148px;height:1px;background:#dadada"></div>
<div style="left:11px;top:557.6949999999999px;width:12px;height:1px;background:#c8c8c8"></div>
<div style="left:37px;top:553.1949999999999px;width:11px;height:11px;border:1px solid #888;box-sizing:border-box;border-radius:1px;background:#fff"></div>
<div class="t" style="left:61px;top:551.19px;height:14px;line-height:14px;font-size:8.5px;color:#222;text-align:left;">10267</div>
<div class="t" style="left:122px;top:551.19px;height:14px;line-height:14px;font-size:8.5px;color:#222;text-align:left;white-space:nowrap;overflow:hidden;width:32px">55kW推土</div>
<div style="left:6px;top:586.85px;width:148px;height:1px;background:#dadada"></div>
<div style="left:11px;top:577.465px;width:12px;height:1px;background:#c8c8c8"></div>
<div style="left:37px;top:572.965px;width:11px;height:11px;border:1px solid #888;box-sizing:border-box;border-radius:1px;background:#fff"></div>
<div class="t" style="left:61px;top:570.97px;height:14px;line-height:14px;font-size:8.5px;color:#222;text-align:left;">10268</div>
<div class="t" style="left:122px;top:570.97px;height:14px;line-height:14px;font-size:8.5px;color:#222;text-align:left;white-space:nowrap;overflow:hidden;width:32px">55kW推土</div>
<div style="left:6px;top:606.62px;width:148px;height:1px;background:#dadada"></div>
<div style="left:11px;top:597.235px;width:12px;height:1px;background:#c8c8c8"></div>
<div style="left:37px;top:592.735px;width:11px;height:11px;border:1px solid #888;box-sizing:border-box;border-radius:1px;background:#fff"></div>
<div class="t" style="left:61px;top:590.74px;height:14px;line-height:14px;font-size:8.5px;color:#222;text-align:left;">10269</div>
<div class="t" style="left:122px;top:590.74px;height:14px;line-height:14px;font-size:8.5px;color:#222;text-align:left;white-space:nowrap;overflow:hidden;width:32px">74kW推土</div>
<div style="left:6px;top:626.39px;width:148px;height:1px;background:#dadada"></div>
<div style="left:11px;top:617.005px;width:12px;height:1px;background:#c8c8c8"></div>
<div style="left:37px;top:612.505px;width:11px;height:11px;border:1px solid #888;box-sizing:border-box;border-radius:1px;background:#fff"></div>
<div class="t" style="left:61px;top:610.50px;height:14px;line-height:14px;font-size:8.5px;color:#222;text-align:left;">10270</div>
<div class="t" style="left:122px;top:610.50px;height:14px;line-height:14px;font-size:8.5px;color:#222;text-align:left;white-space:nowrap;overflow:hidden;width:32px">74kW推土</div>
<div style="left:6px;top:646.16px;width:148px;height:1px;background:#dadada"></div>
<div style="left:11px;top:636.775px;width:12px;height:1px;background:#c8c8c8"></div>
<div style="left:37px;top:632.275px;width:11px;height:11px;border:1px solid #888;box-sizing:border-box;border-radius:1px;background:#fff"></div>
<div class="t" style="left:61px;top:630.27px;height:14px;line-height:14px;font-size:8.5px;color:#222;text-align:left;">10271</div>
<div class="t" style="left:122px;top:630.27px;height:14px;line-height:14px;font-size:8.5px;color:#222;text-align:left;white-space:nowrap;overflow:hidden;width:32px">74kW推土</div>
<div style="left:6px;top:665.93px;width:148px;height:1px;background:#dadada"></div>
<div style="left:11px;top:656.545px;width:12px;height:1px;background:#c8c8c8"></div>
<div style="left:37px;top:652.045px;width:11px;height:11px;border:1px solid #888;box-sizing:border-box;border-radius:1px;background:#fff"></div>
<div class="t" style="left:61px;top:650.04px;height:14px;line-height:14px;font-size:8.5px;color:#222;text-align:left;">10272</div>
<div class="t" style="left:122px;top:650.04px;height:14px;line-height:14px;font-size:8.5px;color:#222;text-align:left;white-space:nowrap;overflow:hidden;width:32px">74kW推土</div>
<div style="left:6px;top:685.7px;width:148px;height:1px;background:#dadada"></div>
<div style="left:11px;top:676.315px;width:12px;height:1px;background:#c8c8c8"></div>
<div style="left:37px;top:671.815px;width:11px;height:11px;border:1px solid #888;box-sizing:border-box;border-radius:1px;background:#fff"></div>
<div class="t" style="left:61px;top:669.82px;height:14px;line-height:14px;font-size:8.5px;color:#222;text-align:left;">10273</div>
<div class="t" style="left:122px;top:669.82px;height:14px;line-height:14px;font-size:8.5px;color:#222;text-align:left;white-space:nowrap;overflow:hidden;width:32px">74kW推土</div>
<div style="left:6px;top:705.47px;width:148px;height:1px;background:#dadada"></div>
<div style="left:11px;top:696.085px;width:12px;height:1px;background:#c8c8c8"></div>
<div style="left:37px;top:691.585px;width:11px;height:11px;border:1px solid #888;box-sizing:border-box;border-radius:1px;background:#fff"></div>
<div class="t" style="left:61px;top:689.59px;height:14px;line-height:14px;font-size:8.5px;color:#222;text-align:left;">10274</div>
<div class="t" style="left:122px;top:689.59px;height:14px;line-height:14px;font-size:8.5px;color:#222;text-align:left;white-space:nowrap;overflow:hidden;width:32px">88kW推土</div>
<div style="left:6px;top:725.24px;width:148px;height:1px;background:#dadada"></div>
<div style="left:11px;top:715.855px;width:12px;height:1px;background:#c8c8c8"></div>
<div style="left:37px;top:711.355px;width:11px;height:11px;border:1px solid #888;box-sizing:border-box;border-radius:1px;background:#fff"></div>
<div class="t" style="left:61px;top:709.36px;height:14px;line-height:14px;font-size:8.5px;color:#222;text-align:left;">10275</div>
<div class="t" style="left:122px;top:709.36px;height:14px;line-height:14px;font-size:8.5px;color:#222;text-align:left;white-space:nowrap;overflow:hidden;width:32px">88kW推土</div>
<div style="left:6px;top:745.01px;width:148px;height:1px;background:#dadada"></div>
<div style="left:11px;top:735.625px;width:12px;height:1px;background:#c8c8c8"></div>
<div style="left:37px;top:731.125px;width:11px;height:11px;border:1px solid #888;box-sizing:border-box;border-radius:1px;background:#fff"></div>
<div class="t" style="left:61px;top:729.12px;height:14px;line-height:14px;font-size:8.5px;color:#222;text-align:left;">10276</div>
<div class="t" style="left:122px;top:729.12px;height:14px;line-height:14px;font-size:8.5px;color:#222;text-align:left;white-space:nowrap;overflow:hidden;width:32px">88kW推土</div>
<div style="left:6px;top:764.78px;width:148px;height:1px;background:#dadada"></div>
<div style="left:11px;top:755.395px;width:12px;height:1px;background:#c8c8c8"></div>
<div style="left:37px;top:750.895px;width:11px;height:11px;border:1px solid #888;box-sizing:border-box;border-radius:1px;background:#fff"></div>
<div class="t" style="left:61px;top:748.89px;height:14px;line-height:14px;font-size:8.5px;color:#222;text-align:left;">10277</div>
<div class="t" style="left:122px;top:748.89px;height:14px;line-height:14px;font-size:8.5px;color:#222;text-align:left;white-space:nowrap;overflow:hidden;width:32px">88kW推土</div>
<div style="left:11px;top:486px;width:1px;height:270px;background:#c8c8c8"></div>
<div style="left:59px;top:490px;width:1px;height:266px;background:#d8d8d8"></div>
<div style="left:120px;top:490px;width:1px;height:266px;background:#d8d8d8"></div>
<div style="left:154px;top:452px;width:11px;height:304px;background:#e8e8e8"></div>
<div style="left:154px;top:452px;width:11px;height:10px;background:#d4ecfa"></div>
<svg style="position:absolute;left:156px;top:455px" width="7" height="4" viewBox="0 0 7 4"><path d="M0 4 L3.5 0 L7 4 Z" fill="#555"/></svg>
<div style="left:156px;top:463px;width:8px;height:33px;background:#c4c4c4;border-radius:3px"></div>
<div style="left:154px;top:746px;width:11px;height:10px;background:#d4ecfa"></div>
<svg style="position:absolute;left:156px;top:749px" width="7" height="4" viewBox="0 0 7 4"><path d="M0 0 L3.5 4 L7 0 Z" fill="#555"/></svg>
<div style="left:5px;top:756px;width:149px;height:10px;background:#e8e8e8"></div>
<svg style="position:absolute;left:8px;top:758px" width="4" height="7" viewBox="0 0 4 7"><path d="M4 0 L0 3.5 L4 7 Z" fill="#666"/></svg>
<div style="left:16px;top:757px;width:50px;height:8px;background:#c4c4c4;border-radius:4px"></div>
<div style="left:143px;top:756px;width:11px;height:10px;background:#d4ecfa"></div>
<svg style="position:absolute;left:147px;top:758px" width="4" height="7" viewBox="0 0 4 7"><path d="M0 0 L4 3.5 L0 7 Z" fill="#666"/></svg>
<div style="left:165px;top:189px;width:1px;height:577px;background:#9a9a9a"></div>
<div style="left:167px;top:144px;width:1px;height:625px;background:#e2e2e2"></div>
<svg style="position:absolute;left:171px;top:99px" width="10" height="10" viewBox="0 0 10 10"><path d="M5 1 L1 5 L5 9 M9 1 L5 5 L9 9" stroke="#3a9be0" stroke-width="1.1" fill="none"/></svg>
<svg style="position:absolute;left:181px;top:99px" width="6" height="10" viewBox="0 0 6 10"><path d="M1 1 L5 5 L1 9 Z" fill="#fff"/></svg>
<svg style="position:absolute;left:193px;top:99px" width="10" height="10" viewBox="0 0 10 10"><path d="M1 1 L5 5 L1 9 M5 1 L9 5 L5 9" stroke="#3a9be0" stroke-width="1.1" fill="none"/></svg>
<svg style="position:absolute;left:193px;top:115px" width="11" height="11" viewBox="0 0 11 11"><rect x="1" y="1" width="8.5" height="8.5" fill="#f6f4dc" stroke="#8a8a8a" stroke-width="0.9"/><rect x="2.5" y="1.5" width="5" height="3.5" fill="#9cc8ea"/><rect x="7.5" y="3" width="2" height="6" fill="#c8c8c8"/></svg>
<div class="t" style="left:187.5px;top:132.00px;width:20px;height:12px;line-height:12px;font-size:9.6px;color:#111;text-align:center;font-weight:bold;-webkit-text-stroke:0.1px #111">整</div>
<div class="t" style="left:187.5px;top:142.30px;width:20px;height:12px;line-height:12px;font-size:9.6px;color:#111;text-align:center;font-weight:bold;-webkit-text-stroke:0.1px #111">个</div>
<div class="t" style="left:187.5px;top:152.60px;width:20px;height:12px;line-height:12px;font-size:9.6px;color:#111;text-align:center;font-weight:bold;-webkit-text-stroke:0.1px #111">项</div>
<div class="t" style="left:187.5px;top:162.90px;width:20px;height:12px;line-height:12px;font-size:9.6px;color:#111;text-align:center;font-weight:bold;-webkit-text-stroke:0.1px #111">目</div>
<div style="left:212px;top:93px;width:868px;height:676px;background:#fff"></div>
<div class="t" style="left:212px;top:95.00px;height:14px;line-height:14px;font-size:8.8px;color:#222;text-align:left;">当前编辑的工程是：项目1，1标段</div>
<div style="left:228px;top:129px;width:852px;height:15px;background:#dce2df"></div>
<div style="left:228px;top:144px;width:852px;height:25px;background:#e3fbd6"></div>
<div style="left:228px;top:169px;width:852px;height:14px;background:#fff"></div>
<div style="left:228px;top:183px;width:852px;height:26px;background:#ade6f8"></div>
<div style="left:228px;top:209px;width:852px;height:25px;background:#ade6f8"></div>
<div style="left:228px;top:234px;width:852px;height:25px;background:#ade6f8"></div>
<div style="left:212px;top:111px;width:16px;height:18px;background:#fde2c4"></div>
<div style="left:429px;top:111px;width:174px;height:18px;background:#fde2c4"></div>
<div style="left:429px;top:128px;width:174px;height:1.5px;background:#3a9be0"></div>
<div style="left:212px;top:144px;width:16px;height:25px;background:#fde2c4"></div>
<div style="left:211px;top:111px;width:1px;height:148px;background:#c4cbcb"></div>
<div style="left:228px;top:111px;width:1px;height:148px;background:#c4cbcb"></div>
<div style="left:305px;top:111px;width:1px;height:148px;background:#c4cbcb"></div>
<div style="left:400px;top:111px;width:1px;height:148px;background:#c4cbcb"></div>
<div style="left:429px;top:111px;width:1px;height:148px;background:#c4cbcb"></div>
<div style="left:603px;top:111px;width:1px;height:148px;background:#c4cbcb"></div>
<div style="left:695px;top:111px;width:1px;height:148px;background:#c4cbcb"></div>
<div style="left:755px;top:111px;width:1px;height:148px;background:#c4cbcb"></div>
<div style="left:811px;top:111px;width:1px;height:148px;background:#c4cbcb"></div>
<div style="left:843px;top:111px;width:1px;height:148px;background:#c4cbcb"></div>
<div style="left:905px;top:111px;width:1px;height:148px;background:#c4cbcb"></div>
<div style="left:936px;top:111px;width:1px;height:148px;background:#c4cbcb"></div>
<div style="left:979px;top:111px;width:1px;height:148px;background:#c4cbcb"></div>
<div style="left:1026px;top:111px;width:1px;height:148px;background:#c4cbcb"></div>
<div style="left:1072px;top:111px;width:1px;height:148px;background:#c4cbcb"></div>
<div style="left:212px;top:111px;width:868px;height:1px;background:#c4cbcb"></div>
<div style="left:212px;top:129px;width:868px;height:1px;background:#c4cbcb"></div>
<div style="left:212px;top:144px;width:868px;height:1px;background:#c4cbcb"></div>
<div style="left:212px;top:169px;width:868px;height:1px;background:#c4cbcb"></div>
<div style="left:212px;top:183px;width:868px;height:1px;background:#c4cbcb"></div>
<div style="left:212px;top:209px;width:868px;height:1px;background:#c4cbcb"></div>
<div style="left:212px;top:234px;width:868px;height:1px;background:#c4cbcb"></div>
<div style="left:212px;top:259px;width:868px;height:1px;background:#c4cbcb"></div>
<div style="left:212px;top:111px;width:868px;height:1px;background:#d8d8d8"></div>
<div style="left:227px;top:144px;width:2px;height:25px;background:#2a8ad0"></div>
<div class="t" style="left:206.5px;top:113.00px;width:120px;height:14px;line-height:14px;font-size:8.8px;color:#222;text-align:center;">序号</div>
<div class="t" style="left:292.5px;top:113.00px;width:120px;height:14px;line-height:14px;font-size:8.8px;color:#222;text-align:center;">编码</div>
<div class="t" style="left:354.5px;top:113.00px;width:120px;height:14px;line-height:14px;font-size:8.8px;color:#222;text-align:center;">类别</div>
<div class="t" style="left:456.0px;top:113.00px;width:120px;height:14px;line-height:14px;font-size:8.8px;color:#222;text-align:center;font-weight:bold">名称</div>
<div class="t" style="left:589.0px;top:113.00px;width:120px;height:14px;line-height:14px;font-size:8.8px;color:#222;text-align:center;">专业类别</div>
<div class="t" style="left:665.0px;top:113.00px;width:120px;height:14px;line-height:14px;font-size:8.8px;color:#222;text-align:center;">项目特征</div>
<div class="t" style="left:723.0px;top:113.00px;width:120px;height:14px;line-height:14px;font-size:8.8px;color:#222;text-align:center;">单价来源</div>
<div class="t" style="left:767.0px;top:113.00px;width:120px;height:14px;line-height:14px;font-size:8.8px;color:#222;text-align:center;">单位</div>
<div class="t" style="left:814.0px;top:113.00px;width:120px;height:14px;line-height:14px;font-size:8.8px;color:#222;text-align:center;">工程量表达式</div>
<div class="t" style="left:860.5px;top:113.00px;width:120px;height:14px;line-height:14px;font-size:8.8px;color:#222;text-align:center;">含量</div>
<div class="t" style="left:897.5px;top:113.00px;width:120px;height:14px;line-height:14px;font-size:8.8px;color:#222;text-align:center;">工程量</div>
<div class="t" style="left:942.5px;top:113.00px;width:120px;height:14px;line-height:14px;font-size:8.8px;color:#222;text-align:center;">建安单价</div>
<div class="t" style="left:989.0px;top:113.00px;width:120px;height:14px;line-height:14px;font-size:8.8px;color:#222;text-align:center;">建安合价</div>
<div style="left:234px;top:139px;width:1px;height:108px;background:#b4bcbc"></div>
<div style="left:230px;top:132px;width:10px;height:10px;border:1px solid #9a9a9a;box-sizing:border-box;background:linear-gradient(#fafafa,#d8d8d8);border-radius:1px"></div>
<div style="left:232.5px;top:136.5px;width:5px;height:1.3px;background:#222"></div>
<div style="left:237.5px;top:152px;width:10px;height:10px;border:1px solid #9a9a9a;box-sizing:border-box;background:linear-gradient(#fafafa,#d8d8d8);border-radius:1px"></div>
<div style="left:240.0px;top:156.5px;width:5px;height:1.3px;background:#222"></div>
<div style="left:242px;top:161px;width:1px;height:15.5px;background:#a8a8a8"></div>
<div style="left:242px;top:176px;width:13px;height:1px;background:#a8a8a8"></div>
<div style="left:234px;top:196px;width:14px;height:1px;background:#9fb4ba"></div>
<div style="left:234px;top:221px;width:14px;height:1px;background:#9fb4ba"></div>
<div style="left:234px;top:246px;width:14px;height:1px;background:#9fb4ba"></div>
<div style="left:234.5px;top:183px;width:1px;height:1px;"></div>
<div class="t" style="left:432px;top:129.50px;height:14px;line-height:14px;font-size:9.3px;color:#111;text-align:left;font-weight:bold">整个项目</div>
<div class="t" style="left:905px;top:129.00px;width:120px;height:14px;line-height:14px;font-size:9px;color:#111;text-align:right;font-weight:bold;letter-spacing:0.9px">7.35</div>
<div class="t" style="left:951px;top:129.00px;width:120px;height:14px;line-height:14px;font-size:9px;color:#111;text-align:right;font-weight:bold;letter-spacing:0.9px">7.35</div>
<div class="t" style="left:212.0px;top:150.00px;width:16px;height:14px;line-height:14px;font-size:10px;color:#111;text-align:center;font-weight:bold;font-family:Liberation Serif">1</div>
<div class="t" style="left:307px;top:149.00px;height:14px;line-height:14px;font-size:8.6px;color:#222;text-align:left;">500103001001</div>
<div class="t" style="left:401.0px;top:150.00px;width:28px;height:14px;line-height:14px;font-size:9.3px;color:#222;text-align:center;">项</div>
<div style="left:429px;top:144px;width:175px;height:26px;border:1.5px solid #707070;box-sizing:border-box"></div>
<div class="t" style="left:432px;top:150.00px;height:14px;line-height:14px;font-size:8.8px;color:#222;text-align:left;">一般土方填筑</div>
<div class="t" style="left:588px;top:148.00px;height:14px;line-height:14px;font-size:9px;color:#3a7acc;text-align:left;">···</div>
<div class="t" style="left:605px;top:150.00px;height:14px;line-height:14px;font-size:8.8px;color:#222;text-align:left;">建筑</div>
<div class="t" style="left:813px;top:149.00px;height:14px;line-height:14px;font-size:8.5px;color:#222;text-align:left;letter-spacing:0.9px">m3</div>
<div class="t" style="left:845px;top:149.00px;height:14px;line-height:14px;font-size:8.5px;color:#222;text-align:left;letter-spacing:0.9px">21</div>
<div class="t" style="left:857.5px;top:149.00px;width:120px;height:14px;line-height:14px;font-size:8.5px;color:#222;text-align:right;letter-spacing:0.9px">21</div>
<div class="t" style="left:905px;top:149.00px;width:120px;height:14px;line-height:14px;font-size:8.5px;color:#222;text-align:right;letter-spacing:0.9px">0.35</div>
<div class="t" style="left:951px;top:149.00px;width:120px;height:14px;line-height:14px;font-size:8.5px;color:#222;text-align:right;letter-spacing:0.9px">7.35</div>
<div class="t" style="left:307px;top:169.00px;height:14px;line-height:14px;font-size:8.6px;color:#222;text-align:left;">10264</div>
<div class="t" style="left:401.0px;top:170.00px;width:28px;height:14px;line-height:14px;font-size:9.3px;color:#222;text-align:center;">定</div>
<div class="t" style="left:432px;top:170.00px;height:14px;line-height:14px;font-size:8.6px;color:#222;text-align:left;white-space:nowrap">55kW推土机推土 推土距离≤20m</div>
<div class="t" style="left:813px;top:169.00px;height:14px;line-height:14px;font-size:8.5px;color:#222;text-align:left;letter-spacing:0.2px">100m3</div>
<div class="t" style="left:845px;top:169.00px;height:14px;line-height:14px;font-size:8.5px;color:#222;text-align:left;letter-spacing:0.9px">QDL</div>
<div class="t" style="left:814.5px;top:169.00px;width:120px;height:14px;line-height:14px;font-size:8.5px;color:#222;text-align:right;letter-spacing:0.9px">0.01</div>
<div class="t" style="left:857.5px;top:169.00px;width:120px;height:14px;line-height:14px;font-size:8.5px;color:#222;text-align:right;letter-spacing:0.9px">0.21</div>
<div class="t" style="left:905px;top:169.00px;width:120px;height:14px;line-height:14px;font-size:8.5px;color:#222;text-align:right;letter-spacing:0.9px">35.2</div>
<div class="t" style="left:951px;top:169.00px;width:120px;height:14px;line-height:14px;font-size:8.5px;color:#222;text-align:right;letter-spacing:0.9px">7.39</div>
<div class="t" style="left:212.0px;top:189.50px;width:16px;height:14px;line-height:14px;font-size:9px;color:#444;text-align:center;font-family:Liberation Serif">2</div>
<div class="t" style="left:307px;top:188.50px;height:14px;line-height:14px;font-size:8.6px;color:#222;text-align:left;">500103001002</div>
<div class="t" style="left:401.0px;top:189.50px;width:28px;height:14px;line-height:14px;font-size:9.3px;color:#222;text-align:center;">项</div>
<div class="t" style="left:432px;top:189.50px;height:14px;line-height:14px;font-size:8.8px;color:#222;text-align:left;">一般土方填筑</div>
<div class="t" style="left:605px;top:189.50px;height:14px;line-height:14px;font-size:8.8px;color:#222;text-align:left;">建筑</div>
<div class="t" style="left:813px;top:188.50px;height:14px;line-height:14px;font-size:8.5px;color:#222;text-align:left;letter-spacing:0.9px">m3</div>
<div class="t" style="left:845px;top:188.50px;height:14px;line-height:14px;font-size:8.5px;color:#222;text-align:left;letter-spacing:0.9px">43</div>
<div class="t" style="left:857.5px;top:188.50px;width:120px;height:14px;line-height:14px;font-size:8.5px;color:#222;text-align:right;letter-spacing:0.9px">43</div>
<div class="t" style="left:905px;top:188.50px;width:120px;height:14px;line-height:14px;font-size:8.5px;color:#222;text-align:right;letter-spacing:0.9px">0</div>
<div class="t" style="left:951px;top:188.50px;width:120px;height:14px;line-height:14px;font-size:8.5px;color:#222;text-align:right;letter-spacing:0.9px">0</div>
<div class="t" style="left:212.0px;top:214.50px;width:16px;height:14px;line-height:14px;font-size:9px;color:#444;text-align:center;font-family:Liberation Serif">3</div>
<div class="t" style="left:307px;top:213.50px;height:14px;line-height:14px;font-size:8.6px;color:#222;text-align:left;">500103001003</div>
<div class="t" style="left:401.0px;top:214.50px;width:28px;height:14px;line-height:14px;font-size:9.3px;color:#222;text-align:center;">项</div>
<div class="t" style="left:432px;top:214.50px;height:14px;line-height:14px;font-size:8.8px;color:#222;text-align:left;">一般土方填筑</div>
<div class="t" style="left:605px;top:214.50px;height:14px;line-height:14px;font-size:8.8px;color:#222;text-align:left;">建筑</div>
<div class="t" style="left:813px;top:213.50px;height:14px;line-height:14px;font-size:8.5px;color:#222;text-align:left;letter-spacing:0.9px">m3</div>
<div class="t" style="left:845px;top:213.50px;height:14px;line-height:14px;font-size:8.5px;color:#222;text-align:left;letter-spacing:0.9px">43</div>
<div class="t" style="left:857.5px;top:213.50px;width:120px;height:14px;line-height:14px;font-size:8.5px;color:#222;text-align:right;letter-spacing:0.9px">43</div>
<div class="t" style="left:905px;top:213.50px;width:120px;height:14px;line-height:14px;font-size:8.5px;color:#222;text-align:right;letter-spacing:0.9px">0</div>
<div class="t" style="left:951px;top:213.50px;width:120px;height:14px;line-height:14px;font-size:8.5px;color:#222;text-align:right;letter-spacing:0.9px">0</div>
<div class="t" style="left:212.0px;top:239.50px;width:16px;height:14px;line-height:14px;font-size:9px;color:#444;text-align:center;font-family:Liberation Serif">4</div>
<div class="t" style="left:307px;top:238.50px;height:14px;line-height:14px;font-size:8.6px;color:#222;text-align:left;">500103001004</div>
<div class="t" style="left:401.0px;top:239.50px;width:28px;height:14px;line-height:14px;font-size:9.3px;color:#222;text-align:center;">项</div>
<div class="t" style="left:432px;top:239.50px;height:14px;line-height:14px;font-size:8.8px;color:#222;text-align:left;">一般土方填筑</div>
<div class="t" style="left:605px;top:239.50px;height:14px;line-height:14px;font-size:8.8px;color:#222;text-align:left;">建筑</div>
<div class="t" style="left:813px;top:238.50px;height:14px;line-height:14px;font-size:8.5px;color:#222;text-align:left;letter-spacing:0.9px">m3</div>
<div class="t" style="left:845px;top:238.50px;height:14px;line-height:14px;font-size:8.5px;color:#222;text-align:left;letter-spacing:0.9px">43</div>
<div class="t" style="left:857.5px;top:238.50px;width:120px;height:14px;line-height:14px;font-size:8.5px;color:#222;text-align:right;letter-spacing:0.9px">43</div>
<div class="t" style="left:905px;top:238.50px;width:120px;height:14px;line-height:14px;font-size:8.5px;color:#222;text-align:right;letter-spacing:0.9px">0</div>
<div class="t" style="left:951px;top:238.50px;width:120px;height:14px;line-height:14px;font-size:8.5px;color:#222;text-align:right;letter-spacing:0.9px">0</div>
<div style="left:212px;top:351px;width:868px;height:11px;background:#e8e8e8"></div>
<svg style="position:absolute;left:215px;top:353px" width="5" height="8" viewBox="0 0 5 8"><path d="M5 0 L0 4 L5 8 Z" fill="#666"/></svg>
<div style="left:222px;top:353px;width:776px;height:7px;background:#bdbdbd;border-radius:4px"></div>
<div style="left:791px;top:361.5px;width:64px;height:4.5px;background:#1a92e6"></div>
<svg style="position:absolute;left:820px;top:361.5px" width="6" height="4" viewBox="0 0 6 4"><path d="M0.5 0.5 L3 3 L5.5 0.5" stroke="#fff" stroke-width="1" fill="none"/></svg>
<div style="left:212px;top:368.5px;width:258px;height:1px;background:#8ec8ee"></div>
<div style="left:212px;top:391.5px;width:868px;height:1px;background:#8ec8ee"></div>
<div style="left:282px;top:369px;width:1px;height:23px;background:#8ec8ee"></div>
<div class="t" style="left:187.0px;top:373.50px;width:120px;height:14px;line-height:14px;font-size:8.8px;color:#222;text-align:center;">工料机显示</div>
<div style="left:343px;top:369px;width:1px;height:23px;background:#8ec8ee"></div>
<div class="t" style="left:252.5px;top:373.50px;width:120px;height:14px;line-height:14px;font-size:8.8px;color:#222;text-align:center;">单价构成</div>
<div style="left:404px;top:369px;width:1px;height:23px;background:#8ec8ee"></div>
<div class="t" style="left:313.5px;top:373.50px;width:120px;height:14px;line-height:14px;font-size:8.8px;color:#222;text-align:center;">标准换算</div>
<div style="left:470px;top:369px;width:1px;height:23px;background:#8ec8ee"></div>
<div class="t" style="left:377.0px;top:373.50px;width:120px;height:14px;line-height:14px;font-size:8.8px;color:#222;text-align:center;">换算信息</div>
<div style="left:219px;top:401px;width:16px;height:18px;background:#fde2c4"></div>
<div style="left:235px;top:419px;width:485px;height:14.5px;background:#d4f4fa"></div>
<div style="left:545px;top:520.14px;width:69px;height:14.44px;background:#fefde4"></div>
<div style="left:545px;top:534.58px;width:69px;height:14.44px;background:#fefde4"></div>
<div style="left:545px;top:549.02px;width:69px;height:14.44px;background:#fefde4"></div>
<div style="left:545px;top:563.46px;width:69px;height:14.44px;background:#fefde4"></div>
<div style="left:219px;top:401px;width:1px;height:177px;background:#d0d0d0"></div>
<div style="left:235px;top:401px;width:1px;height:177px;background:#d0d0d0"></div>
<div style="left:323px;top:401px;width:1px;height:177px;background:#d0d0d0"></div>
<div style="left:545px;top:401px;width:1px;height:177px;background:#d0d0d0"></div>
<div style="left:614px;top:401px;width:1px;height:177px;background:#d0d0d0"></div>
<div style="left:657px;top:401px;width:1px;height:177px;background:#d0d0d0"></div>
<div style="left:719px;top:401px;width:1px;height:177px;background:#d0d0d0"></div>
<div style="left:219px;top:401px;width:501px;height:1px;background:#c8c8c8"></div>
<div style="left:219px;top:419px;width:501px;height:1px;background:#d0d0d0"></div>
<div style="left:219px;top:433.5px;width:501px;height:1px;background:#d0d0d0"></div>
<div style="left:219px;top:447.94px;width:501px;height:1px;background:#d0d0d0"></div>
<div style="left:219px;top:462.38px;width:501px;height:1px;background:#d0d0d0"></div>
<div style="left:219px;top:476.82px;width:501px;height:1px;background:#d0d0d0"></div>
<div style="left:219px;top:491.26px;width:501px;height:1px;background:#d0d0d0"></div>
<div style="left:219px;top:505.7px;width:501px;height:1px;background:#d0d0d0"></div>
<div style="left:219px;top:520.14px;width:501px;height:1px;background:#d0d0d0"></div>
<div style="left:219px;top:534.58px;width:501px;height:1px;background:#d0d0d0"></div>
<div style="left:219px;top:549.02px;width:501px;height:1px;background:#d0d0d0"></div>
<div style="left:219px;top:563.46px;width:501px;height:1px;background:#d0d0d0"></div>
<div style="left:219px;top:577.9px;width:501px;height:1px;background:#d0d0d0"></div>
<div class="t" style="left:219.0px;top:403.00px;width:120px;height:14px;line-height:14px;font-size:8.8px;color:#222;text-align:center;">内容说明</div>
<div class="t" style="left:219.0px;top:419.50px;width:16px;height:14px;line-height:14px;font-size:8.5px;color:#333;text-align:center;">0</div>
<div class="t" style="left:237px;top:419.00px;height:14px;line-height:14px;font-size:8.8px;color:#111;text-align:left;">计算结果</div>
<div class="t" style="left:218.0px;top:433.70px;width:16px;height:14px;line-height:14px;font-size:8.5px;color:#333;text-align:center;font-family:Liberation Serif">1</div>
<div class="t" style="left:325px;top:433.70px;height:14px;line-height:14px;font-size:8.5px;color:#222;text-align:left;letter-spacing:0.9px">0</div>
<div class="t" style="left:218.0px;top:448.14px;width:16px;height:14px;line-height:14px;font-size:8.5px;color:#333;text-align:center;font-family:Liberation Serif">2</div>
<div class="t" style="left:325px;top:448.14px;height:14px;line-height:14px;font-size:8.5px;color:#222;text-align:left;letter-spacing:0.9px">0</div>
<div class="t" style="left:218.0px;top:462.58px;width:16px;height:14px;line-height:14px;font-size:8.5px;color:#333;text-align:center;font-family:Liberation Serif">3</div>
<div class="t" style="left:325px;top:462.58px;height:14px;line-height:14px;font-size:8.5px;color:#222;text-align:left;letter-spacing:0.9px">0</div>
<div class="t" style="left:218.0px;top:477.02px;width:16px;height:14px;line-height:14px;font-size:8.5px;color:#333;text-align:center;font-family:Liberation Serif">4</div>
<div class="t" style="left:325px;top:477.02px;height:14px;line-height:14px;font-size:8.5px;color:#222;text-align:left;letter-spacing:0.9px">0</div>
<div class="t" style="left:218.0px;top:491.46px;width:16px;height:14px;line-height:14px;font-size:8.5px;color:#333;text-align:center;font-family:Liberation Serif">5</div>
<div class="t" style="left:325px;top:491.46px;height:14px;line-height:14px;font-size:8.5px;color:#222;text-align:left;letter-spacing:0.9px">0</div>
<div class="t" style="left:218.0px;top:505.90px;width:16px;height:14px;line-height:14px;font-size:8.5px;color:#333;text-align:center;font-family:Liberation Serif">6</div>
<div class="t" style="left:325px;top:505.90px;height:14px;line-height:14px;font-size:8.5px;color:#222;text-align:left;letter-spacing:0.9px">0</div>
<div class="t" style="left:218.0px;top:520.34px;width:16px;height:14px;line-height:14px;font-size:8.5px;color:#333;text-align:center;font-family:Liberation Serif">7</div>
<div class="t" style="left:325px;top:520.34px;height:14px;line-height:14px;font-size:8.5px;color:#222;text-align:left;letter-spacing:0.9px">0</div>
<div class="t" style="left:559.5px;top:520.34px;width:40px;height:14px;line-height:14px;font-size:8.5px;color:#222;text-align:center;letter-spacing:0.9px">0</div>
<div style="left:631px;top:521.84px;width:11px;height:11px;background:#2f86dc;border-radius:1.5px"></div>
<svg style="position:absolute;left:632px;top:522.84px" width="9" height="9" viewBox="0 0 9 9"><path d="M1.5 4.5 L3.8 7 L7.8 2" stroke="#fff" stroke-width="1.5" fill="none"/></svg>
<div class="t" style="left:218.0px;top:534.78px;width:16px;height:14px;line-height:14px;font-size:8.5px;color:#333;text-align:center;font-family:Liberation Serif">8</div>
<div class="t" style="left:325px;top:534.78px;height:14px;line-height:14px;font-size:8.5px;color:#222;text-align:left;letter-spacing:0.9px">0</div>
<div class="t" style="left:559.5px;top:534.78px;width:40px;height:14px;line-height:14px;font-size:8.5px;color:#222;text-align:center;letter-spacing:0.9px">0</div>
<div style="left:631px;top:536.2800000000001px;width:11px;height:11px;background:#2f86dc;border-radius:1.5px"></div>
<svg style="position:absolute;left:632px;top:537.2800000000001px" width="9" height="9" viewBox="0 0 9 9"><path d="M1.5 4.5 L3.8 7 L7.8 2" stroke="#fff" stroke-width="1.5" fill="none"/></svg>
<div class="t" style="left:218.0px;top:549.22px;width:16px;height:14px;line-height:14px;font-size:8.5px;color:#333;text-align:center;font-family:Liberation Serif">9</div>
<div class="t" style="left:325px;top:549.22px;height:14px;line-height:14px;font-size:8.5px;color:#222;text-align:left;letter-spacing:0.9px">0</div>
<div class="t" style="left:559.5px;top:549.22px;width:40px;height:14px;line-height:14px;font-size:8.5px;color:#222;text-align:center;letter-spacing:0.9px">0</div>
<div style="left:631px;top:550.72px;width:11px;height:11px;background:#2f86dc;border-radius:1.5px"></div>
<svg style="position:absolute;left:632px;top:551.72px" width="9" height="9" viewBox="0 0 9 9"><path d="M1.5 4.5 L3.8 7 L7.8 2" stroke="#fff" stroke-width="1.5" fill="none"/></svg>
<div class="t" style="left:218.0px;top:563.66px;width:16px;height:14px;line-height:14px;font-size:8.5px;color:#333;text-align:center;font-family:Liberation Serif">10</div>
<div class="t" style="left:325px;top:563.66px;height:14px;line-height:14px;font-size:8.5px;color:#222;text-align:left;letter-spacing:0.9px">0</div>
<div class="t" style="left:559.5px;top:563.66px;width:40px;height:14px;line-height:14px;font-size:8.5px;color:#222;text-align:center;letter-spacing:0.9px">0</div>
<div style="left:631px;top:565.1600000000001px;width:11px;height:11px;background:#2f86dc;border-radius:1.5px"></div>
<svg style="position:absolute;left:632px;top:566.1600000000001px" width="9" height="9" viewBox="0 0 9 9"><path d="M1.5 4.5 L3.8 7 L7.8 2" stroke="#fff" stroke-width="1.5" fill="none"/></svg>
<div class="t" style="left:218px;top:750.50px;height:14px;line-height:14px;font-size:9.6px;color:#1a2ec8;text-align:left;">说明：在计算式中，如需要注释请填写在{&nbsp;}内.</div>
<div style="left:421px;top:268px;width:315px;height:251px;background:#fff"></div>
<div style="left:423.5px;top:272.5px;width:304.5px;height:242px;background:#f0f0f0;border-right:1px solid #c8c8c8;box-sizing:border-box"></div>
<div style="left:423.5px;top:271px;width:304.5px;height:25px;background:#fff;border-bottom:1px solid #c8c8c8;box-sizing:border-box"></div>
<svg style="position:absolute;left:433px;top:279px" width="12" height="12" viewBox="0 0 12 12"><rect x="0" y="0" width="12" height="12" rx="2.5" fill="#2a7ad0"/><rect x="2" y="2" width="8" height="8" rx="1" fill="none" stroke="#fff" stroke-width="1"/><path d="M3.5 4 L4.5 8 L6 5.5 L7.5 8 L8.5 4" stroke="#fff" stroke-width="0.9" fill="none"/></svg>
<div class="t" style="left:449px;top:278.50px;height:14px;line-height:14px;font-size:9.2px;color:#333;text-align:left;">同清单复用单价</div>
<svg style="position:absolute;left:707px;top:280.5px" width="9" height="9" viewBox="0 0 9 9"><path d="M1 1 L8 8 M8 1 L1 8" stroke="#333" stroke-width="1.5"/></svg>
<div class="t" style="left:439px;top:306.00px;height:14px;line-height:14px;font-size:9.7px;color:#222;text-align:left;white-space:nowrap;-webkit-text-stroke:0.1px currentColor"><b>第一步: 选择复用的清单</b>&nbsp;(直接在编辑区单击清单)</div>
<div style="left:439.5px;top:324px;width:273px;height:76.5px;background:#fff;border:1px solid #c8c8c8;box-sizing:border-box"></div>
<div class="t" style="left:443px;top:329.00px;height:14px;line-height:14px;font-size:8.8px;color:#222;text-align:left;">1,</div>
<div class="t" style="left:439px;top:405.50px;height:14px;line-height:14px;font-size:9.7px;color:#222;text-align:left;white-space:nowrap;-webkit-text-stroke:0.1px currentColor"><b>第二步: 选择要复用的位置</b></div>
<div style="left:438.5px;top:427.5px;width:9px;height:9px;border:1px solid #c8c8c8;border-radius:50%;box-sizing:border-box;background:#e8e8e8"></div>
<div style="left:441px;top:430px;width:4px;height:4px;border-radius:50%;background:#b8b8b8"></div>
<div class="t" style="left:453px;top:425.50px;height:14px;line-height:14px;font-size:9.3px;color:#555;text-align:left;">本标段</div>
<div style="left:496px;top:428px;width:9px;height:9px;border:1px solid #c8c8c8;border-radius:50%;box-sizing:border-box;background:#f4f4f4"></div>
<div class="t" style="left:510px;top:425.50px;height:14px;line-height:14px;font-size:9.3px;color:#555;text-align:left;">其他标段</div>
<div style="left:554px;top:423.5px;width:76px;height:17.5px;background:#fff;border:1px solid #c0c0c0;box-sizing:border-box"></div>
<div class="t" style="left:556px;top:425.50px;height:14px;line-height:14px;font-size:9.3px;color:#222;text-align:left;">全部</div>
<svg style="position:absolute;left:620px;top:431px" width="6" height="4" viewBox="0 0 6 4"><path d="M0 0 L6 0 L3 3 Z" fill="#777"/></svg>
<div class="t" style="left:439px;top:454.50px;height:14px;line-height:14px;font-size:9.7px;color:#222;text-align:left;white-space:nowrap;-webkit-text-stroke:0.1px currentColor"><b>第三步: 选择匹配条件</b></div>
<div style="left:439px;top:471.5px;width:10.5px;height:10.5px;background:#3d8fe0;border-radius:1.5px"></div>
<svg style="position:absolute;left:439.8px;top:472.3px" width="9" height="9" viewBox="0 0 9 9"><path d="M1.5 4.5 L3.8 7 L7.8 2" stroke="#fff" stroke-width="1.5" fill="none"/></svg>
<div class="t" style="left:454px;top:470.00px;height:14px;line-height:14px;font-size:9.3px;color:#222;text-align:left;">编码</div>
<div style="left:489.5px;top:471.5px;width:10.5px;height:10.5px;background:#3d8fe0;border-radius:1.5px"></div>
<svg style="position:absolute;left:490.3px;top:472.3px" width="9" height="9" viewBox="0 0 9 9"><path d="M1.5 4.5 L3.8 7 L7.8 2" stroke="#fff" stroke-width="1.5" fill="none"/></svg>
<div class="t" style="left:504px;top:470.00px;height:14px;line-height:14px;font-size:9.3px;color:#222;text-align:left;">名称</div>
<div style="left:539.5px;top:471.5px;width:10.5px;height:10.5px;background:#3d8fe0;border-radius:1.5px"></div>
<svg style="position:absolute;left:540.3px;top:472.3px" width="9" height="9" viewBox="0 0 9 9"><path d="M1.5 4.5 L3.8 7 L7.8 2" stroke="#fff" stroke-width="1.5" fill="none"/></svg>
<div class="t" style="left:554.5px;top:470.00px;height:14px;line-height:14px;font-size:9.3px;color:#222;text-align:left;">单位</div>
<div style="left:589.5px;top:471.5px;width:10.5px;height:10.5px;background:#3d8fe0;border-radius:1.5px"></div>
<svg style="position:absolute;left:590.3px;top:472.3px" width="9" height="9" viewBox="0 0 9 9"><path d="M1.5 4.5 L3.8 7 L7.8 2" stroke="#fff" stroke-width="1.5" fill="none"/></svg>
<div class="t" style="left:605px;top:470.00px;height:14px;line-height:14px;font-size:9.3px;color:#222;text-align:left;">项目特征</div>
<div style="left:653px;top:488px;width:65px;height:18.5px;background:#1a97e8;border-radius:1.5px"></div>
<div class="t" style="left:653.0px;top:490.00px;width:65px;height:14px;line-height:14px;font-size:9.3px;color:#fff;text-align:center;">复用单价</div>
<div style="left:421px;top:268px;width:315px;height:251px;border:2.6px solid #e24a4a;box-sizing:border-box"></div>
<div style="left:0px;top:769px;width:1080px;height:22px;background:#f2f2f2;border-top:1px solid #e2e2e2;box-sizing:border-box"></div>
<div style="left:0px;top:790.5px;width:1080px;height:1.5px;background:#fff"></div>
<div style="left:0px;top:792px;width:1080px;height:1px;background:#444"></div>
<div style="left:37px;top:792px;width:261px;height:1px;background:#d8d8d8"></div>
<div class="t" style="left:8px;top:774.00px;height:14px;line-height:14px;font-size:9px;color:#333;text-align:left;">定额标准: 全统水利2002定额</div>
<div style="left:146px;top:774px;width:1px;height:14px;background:#a8a8a8"></div>
<div class="t" style="left:158px;top:774.00px;height:14px;line-height:14px;font-size:9px;color:#333;text-align:left;">取费依据: 编制规定2014-全费用</div>
<div style="left:309px;top:774px;width:1px;height:14px;background:#a8a8a8"></div>
<div class="t" style="left:322px;top:774.00px;height:14px;line-height:14px;font-size:9px;color:#333;text-align:left;">计税方式: 增值税</div>
<div style="left:411px;top:774px;width:1px;height:14px;background:#a8a8a8"></div>
<div class="t" style="left:424px;top:774.00px;height:14px;line-height:14px;font-size:9px;color:#333;text-align:left;">营改增文件: 办财务函[2019]448号</div>
<div style="left:584px;top:774px;width:1px;height:14px;background:#a8a8a8"></div>
<div class="t" style="left:51px;top:758px;height:30px;line-height:30px;font-size:21.5px;font-weight:bold;letter-spacing:0.6px;color:rgba(255,255,255,0.9);-webkit-text-stroke:0;text-shadow:0 0 1px rgba(90,90,90,.7),1px 1px 1px rgba(80,80,80,.45);white-space:nowrap">大数跨境</div>
<svg style="position:absolute;left:8px;top:758px" width="42" height="30" viewBox="0 0 42 30"><g fill="none" stroke="rgba(120,120,120,.55)" stroke-width="3.2"><path d="M7 11 L11 8 V24"/><circle cx="21" cy="11.5" r="5"/><circle cx="31.5" cy="11.5" r="5"/></g><g fill="none" stroke="#fff" stroke-width="2"><path d="M7 11 L11 8 V24"/><circle cx="21" cy="11.5" r="5"/><circle cx="31.5" cy="11.5" r="5"/></g></svg>
<div style="left:363px;top:34px;width:51px;height:62px;border:2.5px solid #e24a4a;box-sizing:border-box"></div>
<svg style="position:absolute;left:415px;top:75px" width="140" height="200" viewBox="0 0 140 200"><path d="M14.26 8.21 L117.71 178.22 L114.40 180.28 L126.00 187.20 L124.93 173.74 L121.62 175.79 L14.94 7.79 Z" fill="#ec3e3e"/></svg>
</body></html>
